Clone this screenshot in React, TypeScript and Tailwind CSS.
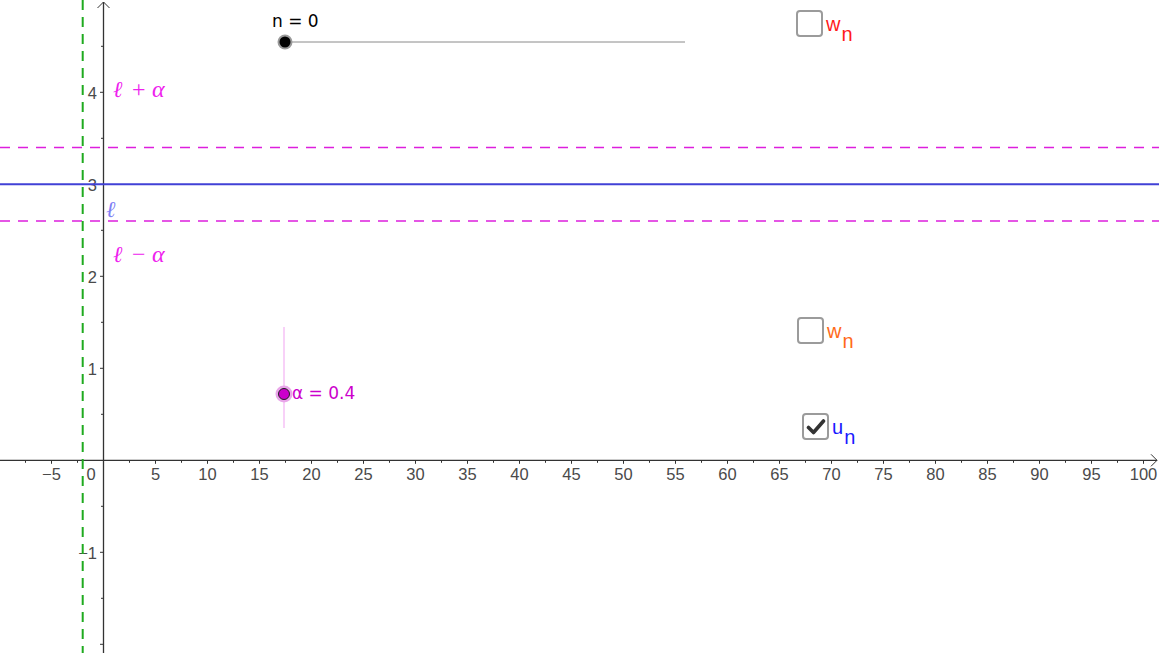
const X = (x: number) => 103.5 + 10.4 * x;
const Y = (y: number) => 460.3 - 92 * y;

const AXIS = '#333333';
const LABEL = '#4a4a4a';
const MAGENTA = '#dd1fdd';

const xTicks = Array.from({ length: 44 }, (_, i) => (i - 3) * 2.5).filter((v) => v !== 0);
const yTicks = Array.from({ length: 14 }, (_, i) => -2 + i * 0.5).filter((v) => v !== 0);

function Checkbox({
  left,
  top,
  checked,
  letter,
  color,
}: {
  left: number;
  top: number;
  checked?: boolean;
  letter: string;
  color: string;
}) {
  return (
    <div className="absolute flex items-start" style={{ left, top }}>
      <div className="flex h-[27px] w-[27px] items-center justify-center rounded-[4px] border-2 border-[#9b9b9b] bg-white">
        {checked && (
          <svg width="20" height="18" viewBox="0 0 20 18">
            <path d="M2.5 9.5 L7.5 14.5 L17.5 3" fill="none" stroke="#333" strokeWidth="3.6" strokeLinecap="round" strokeLinejoin="round" />
          </svg>
        )}
      </div>
      <div className="ml-[3px] flex font-['Liberation_Sans',Arial,sans-serif] text-[20px] leading-none" style={{ color }}>
        <span className="mt-[4px]">{letter}</span>
        <span className="mt-[14px] ml-[1px]">n</span>
      </div>
    </div>
  );
}

export default function App() {
  return (
    <div className="relative h-[653px] w-[1159px] overflow-hidden bg-white">
      <svg className="absolute inset-0" width="1159" height="653" viewBox="0 0 1159 653">
        {/* x axis */}
        <line x1="0" y1={Y(0)} x2="1157" y2={Y(0)} stroke={AXIS} strokeWidth="1.3" />
        <path d={`M1151 ${Y(0) - 6} L1157 ${Y(0)} L1151 ${Y(0) + 6}`} fill="none" stroke={AXIS} strokeWidth="1" />
        {xTicks.map((v) => (
          <line key={v} x1={X(v)} y1={Y(0)} x2={X(v)} y2={Y(0) + (v % 5 === 0 ? 3.5 : 2.5)} stroke={AXIS} strokeWidth="1" />
        ))}
        {/* y axis */}
        <line x1={X(0)} y1="2" x2={X(0)} y2="653" stroke={AXIS} strokeWidth="1.3" />
        <path d={`M${X(0) - 6} 8 L${X(0)} 2 L${X(0) + 6} 8`} fill="none" stroke={AXIS} strokeWidth="1" />
        {yTicks.map((v) => (
          <line key={v} x1={X(0) - (Number.isInteger(v) ? 3.5 : 2.5)} y1={Y(v)} x2={X(0)} y2={Y(v)} stroke={AXIS} strokeWidth="1" />
        ))}

        <g fontFamily="'Liberation Sans', Arial, sans-serif" fontSize="16.5" fill={LABEL}>
          {xTicks
            .filter((v) => v % 5 === 0)
            .map((v) => (
              <text key={v} x={X(v)} y="479.5" textAnchor="middle">
                {v < 0 ? `\u2212${-v}` : v}
              </text>
            ))}
          <text x="86.5" y="479.5">0</text>
          {[4, 3, 2, 1, -1].map((v) => (
            <text key={v} x="97" y={Y(v) + 6.5} textAnchor="end">
              {v < 0 ? `\u2212${-v}` : v}
            </text>
          ))}
        </g>

        {/* lines */}
        <line x1="0" y1={Y(3.4)} x2="1159" y2={Y(3.4)} stroke={MAGENTA} strokeWidth="1.5" strokeDasharray="10 8" />
        <line x1="0" y1={Y(2.6)} x2="1159" y2={Y(2.6)} stroke={MAGENTA} strokeWidth="1.5" strokeDasharray="10 8" />
        <line x1="0" y1={Y(3)} x2="1159" y2={Y(3)} stroke="#4141d6" strokeWidth="2" />
        <line x1={X(-2)} y1="0" x2={X(-2)} y2="653" stroke="#1faa1f" strokeWidth="2" strokeDasharray="10 7" />

        {/* math labels */}
        <g fontFamily="'DejaVu Serif', 'Liberation Serif', serif" fontSize="23" fill="#ee22ee">
          <text x="113" y="97" fontStyle="italic">ℓ</text>
          <text x="132" y="97" fontFamily="'Liberation Serif', serif" fontSize="24">+</text>
          <text x="152" y="97" fontStyle="italic" fontFamily="'Liberation Serif', serif" fontSize="24">α</text>
          <text x="113" y="262" fontStyle="italic">ℓ</text>
          <text x="132" y="262" fontFamily="'Liberation Serif', serif" fontSize="24">−</text>
          <text x="152" y="262" fontStyle="italic" fontFamily="'Liberation Serif', serif" fontSize="24">α</text>
        </g>
        <text x="106" y="217" fontFamily="'DejaVu Serif', serif" fontSize="23" fontStyle="italic" fill="#7f7ff5">
          ℓ
        </text>

        {/* n slider */}
        <line x1="285" y1="42" x2="685" y2="42" stroke="#8a8a8a" strokeWidth="1" />
        <circle cx="285" cy="42" r="7.5" fill="#9a9a9a" />
        <circle cx="285" cy="42" r="5.5" fill="#000" />
        <text x="272" y="26.5" fontFamily="'DejaVu Sans', sans-serif" fontSize="17" fill="#000">
          n = 0
        </text>

        {/* alpha slider */}
        <line x1="284" y1="327" x2="284" y2="428" stroke="#f1a3f1" strokeWidth="1" />
        <circle cx="284" cy="394" r="8.5" fill="#e9a6e9" />
        <circle cx="284" cy="394" r="5.5" fill="#cc00cc" stroke="#222" strokeWidth="1" />
        <text x="292" y="398.5" fontFamily="'DejaVu Sans', sans-serif" fontSize="17" fill="#cc00cc">
          α = 0.4
        </text>
      </svg>

      <Checkbox left={796} top={10} letter="w" color="#ff1a1a" />
      <Checkbox left={797} top={317} letter="w" color="#ff6a1a" />
      <Checkbox left={802} top={413} letter="u" color="#1a1aff" checked />
    </div>
  );
}
